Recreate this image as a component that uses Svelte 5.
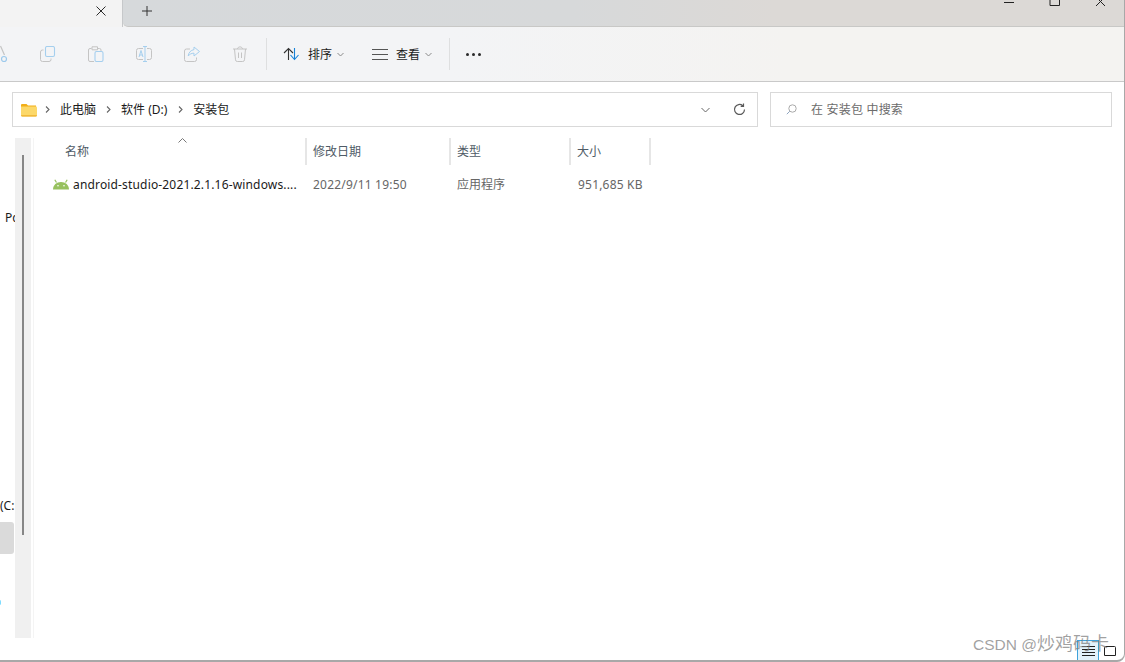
<script>
  const columns = [
    { label: '名称', width: 273, pad: 31 },
    { label: '修改日期', width: 144, pad: 6 },
    { label: '类型', width: 120, pad: 6 },
    { label: '大小', width: 80, pad: 6 }
  ];
</script>

<div class="window">
  <header class="titlebar">
    <div class="tab">
      <svg class="tab-close" width="12" height="12" viewBox="0 0 12 12"><path d="M1.500 1.500l9 9M10.500 1.500l-9 9" stroke="#2b2b2b" fill="none"/></svg>
    </div>
    <div class="tabstrip">
      <svg class="plus" width="12" height="12" viewBox="0 0 12 12"><path d="M6 1v10M1 6h10" stroke="#333" fill="none"/></svg>
      <div class="controls">
        <svg width="12" height="8" viewBox="0 0 12 8"><path d="M1 2.500h10" stroke="#222" fill="none"/></svg>
        <svg width="12" height="8" viewBox="0 0 12 8"><path d="M1.500 -3h8a1 1 0 0 1 1 1v7.500h-9.500v-7.500z" stroke="#222" fill="none"/></svg>
        <svg width="12" height="8" viewBox="0 0 12 8"><path d="M1 -3l9 9M10 -3l-9 9" stroke="#222" fill="none"/></svg>
      </div>
    </div>
  </header>

  <nav class="toolbar">
    <div class="edit-tools">
      <svg class="cut" width="14" height="20" viewBox="0 0 14 20"><path d="M0.500 2l4 9" stroke="#c4c4c4" fill="none" stroke-width="1.200"/><circle cx="4" cy="15" r="2.500" stroke="#9cc9ec" fill="none" stroke-width="1.200"/></svg>
      <svg width="16" height="16" viewBox="0 0 16 16"><path d="M3.500 4h-1a2 2 0 0 0-2 2v7.500a2 2 0 0 0 2 2h6.500a2 2 0 0 0 2-2v-1" stroke="#c4c4c4" fill="none" stroke-width="1"/><rect x="5.500" y=".5" width="9" height="10" rx="1.500" stroke="#a5cfee" fill="#f3f4f6" stroke-width="1.100"/></svg>
      <svg width="16" height="16" viewBox="0 0 16 16"><path d="M3.500 2.500h-1.500a1.500 1.500 0 0 0-1.500 1.500v10a1.500 1.500 0 0 0 1.500 1.500h4M10 2.500h1.500a1.500 1.500 0 0 1 1.500 1.500v1.500M4 .8h5.500v3h-5.500z" stroke="#c4c4c4" fill="none" stroke-width="1"/><rect x="7" y="5.500" width="8" height="10" rx="1.500" stroke="#a5cfee" fill="#f3f4f6" stroke-width="1.100"/></svg>
      <svg width="16" height="16" viewBox="0 0 16 16"><path d="M7 2.500h-4.500a2 2 0 0 0-2 2v7a2 2 0 0 0 2 2h4.500M11 2.500h2.500a2 2 0 0 1 2 2v7a2 2 0 0 1-2 2h-2.500" stroke="#c4c4c4" fill="none" stroke-width="1"/><path d="M9 .5v15M7 .5h4M7 15.500h4M3 11l2-6.500 2 6.500M3.800 9h2.500" stroke="#a5cfee" fill="none" stroke-width="1"/></svg>
      <svg width="16" height="16" viewBox="0 0 16 16"><path d="M6 3h-3.500a2 2 0 0 0-2 2v8.500a2 2 0 0 0 2 2h8a2 2 0 0 0 2-2v-2" stroke="#c4c4c4" fill="none" stroke-width="1"/><path d="M10 1l5.500 4.500-5.500 4.500v-2.800c-2.500 0-4.500 1-5.800 2.800.4-3.500 2.600-5.800 5.800-6.400z" stroke="#a5cfee" fill="none" stroke-width="1"/></svg>
      <svg width="16" height="16" viewBox="0 0 16 16"><path d="M1 3h14M5.500 3c0-2.800 5-2.800 5 0M2.500 3l1 10.800a1.800 1.800 0 0 0 1.800 1.700h5.400a1.800 1.800 0 0 0 1.800-1.700l1-10.800M6.500 6.500v5.500M9.500 6.500v5.500" stroke="#c4c4c4" fill="none" stroke-width="1"/></svg>
    </div>
    <span class="sep first"></span>
    <div class="menu sort">
      <svg width="17" height="14" viewBox="0 0 17 14"><path d="M5.500 13V1.500M1 6l4.500-4.500 4.500 4.500" stroke="#333" fill="none" stroke-width="1.100"/><path d="M11.500 1v11.500M7.500 8l4 4.500 4-4.500" stroke="#1682d8" fill="none" stroke-width="1.100"/></svg>
      <span>排序</span>
      <svg width="7" height="5" viewBox="0 0 7 5"><path d="M.5 1l3 3 3-3" stroke="#8a8a8a" fill="none"/></svg>
    </div>
    <div class="menu view">
      <svg width="16" height="11" viewBox="0 0 16 11"><path d="M0 .5h16M0 5.500h16M0 10.500h16" stroke="#555" fill="none"/></svg>
      <span>查看</span>
      <svg width="7" height="5" viewBox="0 0 7 5"><path d="M.5 1l3 3 3-3" stroke="#8a8a8a" fill="none"/></svg>
    </div>
    <span class="sep second"></span>
    <div class="more"><i></i><i></i><i></i></div>
  </nav>

  <section class="address-row">
    <div class="address">
      <svg class="folder" width="16" height="14" viewBox="0 0 16 14"><path d="M0 2a1 1 0 0 1 1-1h4.500l1.500 1.500h8v3H0z" fill="#f2ae17"/><path d="M0 3.500h15a1 1 0 0 1 1 1V12a1.500 1.500 0 0 1-1.500 1.500h-13A1.500 1.500 0 0 1 0 12z" fill="#fcd869"/><path d="M0 12.300h16v.2a1.200 1.200 0 0 1-1.200 1h-13.600a1.200 1.200 0 0 1-1.200-1z" fill="#eeb02c"/></svg>
      <svg class="crumb-arrow a1" width="5" height="7" viewBox="0 0 5 7"><path d="M1 .5l3 3-3 3" stroke="#666" fill="none" stroke-width="1.100"/></svg>
      <span class="crumb">此电脑</span>
      <svg class="crumb-arrow" width="5" height="7" viewBox="0 0 5 7"><path d="M1 .5l3 3-3 3" stroke="#666" fill="none" stroke-width="1.100"/></svg>
      <span class="crumb drive-crumb">软件 (D:)</span>
      <svg class="crumb-arrow" width="5" height="7" viewBox="0 0 5 7"><path d="M1 .5l3 3-3 3" stroke="#666" fill="none" stroke-width="1.100"/></svg>
      <span class="crumb">安装包</span>
      <svg class="addr-chevron" width="9" height="6" viewBox="0 0 9 6"><path d="M.5 1l4 4 4-4" stroke="#666" fill="none"/></svg>
      <svg class="refresh" width="13" height="13" viewBox="0 0 13 13"><path d="M11.500 6.500a5 5 0 1 1-1.700-3.800M10.500 .5v2.800H7.700" stroke="#5a5a5a" fill="none" stroke-width="1.200"/></svg>
    </div>
    <div class="search">
      <svg width="11" height="11" viewBox="0 0 11 11"><circle cx="6.500" cy="4.500" r="3.700" stroke="#aaa" fill="none"/><path d="M3.800 7.200L.8 10.200" stroke="#8fa5c0" fill="none"/></svg>
      <span>在 安装包 中搜索</span>
    </div>
  </section>

  <main class="body">
    <aside class="nav-pane">
      <span class="nav-text pc">Pc</span>
      <span class="nav-text drive">(C:</span>
      <div class="nav-selected"></div>
      <div class="nav-dot"></div>
    </aside>
    <div class="scroll-strip"><div class="thumb"></div></div>
    <div class="files">
      <div class="header">
        {#each columns as col}
          <div class="col" style="width:{col.width}px;padding-left:{col.pad}px">{col.label}</div>
        {/each}
        <svg class="sort-caret" width="9" height="5" viewBox="0 0 9 5"><path d="M.5 4.500l4-4 4 4" stroke="#777" fill="none"/></svg>
      </div>
      <div class="row">
        <div class="cell name">
          <svg width="16" height="11" viewBox="0 0 16 11"><path d="M0 10.500c0-4.500 3.500-7.500 8-7.500s8 3 8 7.500z" fill="#97c15e"/><path d="M3.500 3.500L1.800.8M12.500 3.500L14.200.8" stroke="#97c15e" fill="none" stroke-width="1.200"/><circle cx="5" cy="6.800" r=".8" fill="#fff"/><circle cx="11" cy="6.800" r=".8" fill="#fff"/></svg>
          <span>android-studio-2021.2.1.16-windows....</span>
        </div>
        <div class="cell date">2022/9/11 19:50</div>
        <div class="cell type">应用程序</div>
        <div class="cell size">951,685 KB</div>
      </div>
    </div>
  </main>

  <div class="view-buttons">
    <div class="view-btn active">
      <svg width="13" height="11" viewBox="0 0 13 11"><path d="M0 .5h13M0 3.500h13M0 6.500h13M0 9.500h13" stroke="#222" fill="none"/></svg>
    </div>
    <div class="view-btn">
      <svg width="12" height="10" viewBox="0 0 12 10"><path d="M1.500 .5h9a1 1 0 0 1 1 1v8h-11v-8a1 1 0 0 1 1-1z" stroke="#222" fill="none"/></svg>
    </div>
  </div>
  <div class="watermark">CSDN @<span>炒鸡码卡</span></div>
</div>

<style>
  :global(body) {
    margin: 0;
    background: #fff;
  }
  .window {
    position: relative;
    width: 1125px;
    height: 662px;
    box-sizing: border-box;
    overflow: hidden;
    display: flex;
    flex-direction: column;
    background: #fff;
    border-right: 1px solid #a8a8a8;
    border-bottom: 2px solid #a8a8a8;
    border-bottom-right-radius: 8px;
    font-family: "Noto Sans", "Noto Sans CJK SC", sans-serif;
    font-size: 12px;
    color: #1a1a1a;
  }
  .titlebar {
    flex: none;
    height: 27px;
    display: flex;
    background: #f3f3f3;
  }
  .tab {
    flex: none;
    width: 123px;
    display: flex;
    justify-content: flex-end;
    align-items: center;
    padding-right: 15px;
    box-sizing: border-box;
    background: #f3f3f3;
    border-right: 1px solid #c6c8ca;
  }
  .tab-close {
    margin-top: -5px;
  }
  .tabstrip {
    flex: 1;
    display: flex;
    align-items: flex-start;
    background: linear-gradient(90deg, #d6d9db 0%, #d7d9da 45%, #dcd9d6 65%, #dcd9d6 100%);
    border-bottom: 1px solid #c8c8c6;
    border-bottom-left-radius: 5px;
  }
  .plus {
    margin: 5px 0 0 18px;
  }
  .controls {
    margin-left: auto;
    margin-right: 17px;
    display: flex;
    gap: 34px;
  }
  .toolbar {
    flex: none;
    height: 55px;
    box-sizing: border-box;
    display: flex;
    align-items: center;
    background: linear-gradient(90deg, #f3f4f6 0%, #f3f4f6 40%, #f4f3f1 70%, #f4f3f1 100%);
    border-bottom: 1px solid #c9c9c9;
  }
  .edit-tools {
    flex: none;
    display: flex;
    align-items: center;
    gap: 32px;
    width: 249px;
  }
  .edit-tools svg {
    flex: none;
  }
  .cut {
    margin-right: -6px;
  }
  .sep {
    flex: none;
    width: 1px;
    height: 32px;
    background: #dedfe0;
  }
  .sep.first {
    margin-left: 17px;
  }
  .menu {
    display: flex;
    align-items: center;
    color: #1c1c1c;
  }
  .menu span {
    margin: 0 5px 0 8px;
  }
  .sort {
    margin-left: 16px;
  }
  .view {
    margin-left: 28px;
  }
  .sep.second {
    margin-left: 17px;
  }
  .more {
    display: flex;
    gap: 3px;
    margin-left: 16px;
  }
  .more i {
    display: block;
    width: 3px;
    height: 3px;
    border-radius: 50%;
    background: #2a2a2a;
  }
  .address-row {
    flex: none;
    display: flex;
    gap: 12px;
    margin: 10px 12px 0 12px;
    height: 35px;
  }
  .address, .search {
    box-sizing: border-box;
    height: 35px;
    border: 1px solid #d9d9d9;
    display: flex;
    align-items: center;
    background: #fff;
  }
  .address {
    width: 746px;
    padding-left: 8px;
  }
  .folder {
    flex: none;
  }
  .crumb-arrow {
    flex: none;
    margin: 0 10px;
  }
  .crumb-arrow.a1 {
    margin: 0 10px 0 8px;
  }
  .crumb {
    margin-top: -2px;
    color: #1a1a1a;
  }
  .drive-crumb {
    margin-right: 1px;
  }
  .addr-chevron {
    margin-left: auto;
    margin-right: 23px;
  }
  .refresh {
    margin-right: 11px;
  }
  .search {
    width: 342px;
    padding-left: 15px;
    color: #6b6b6b;
    gap: 14px;
  }
  .search span {
    margin-top: -2px;
    letter-spacing: 0.2px;
  }
  .body {
    flex: 1;
    display: flex;
    margin-top: 11px;
    min-height: 0;
  }
  .nav-pane {
    flex: none;
    position: relative;
    width: 15px;
    height: 500px;
    overflow: hidden;
  }
  .nav-text {
    position: absolute;
    left: 5px;
    white-space: nowrap;
  }
  .nav-text.pc {
    top: 71px;
  }
  .nav-text.drive {
    left: 0;
    top: 359px;
  }
  .nav-selected {
    position: absolute;
    left: -6px;
    top: 384px;
    width: 20px;
    height: 32px;
    background: #dadada;
    border-radius: 3px;
  }
  .nav-dot {
    position: absolute;
    left: -2px;
    top: 462px;
    width: 3px;
    height: 5px;
    border-radius: 2px;
    background: #7fdcff;
  }
  .scroll-strip {
    flex: none;
    width: 16px;
    height: 500px;
    background: #f0f0f0;
    display: flex;
    flex-direction: column;
    align-items: center;
    box-sizing: border-box;
    padding-top: 17px;
  }
  .thumb {
    width: 2px;
    height: 380px;
    background: #868686;
  }
  .files {
    flex: 1;
    margin-left: 2px;
    height: 500px;
    border-left: 1px solid #f4f4f4;
    position: relative;
  }
  .header {
    display: flex;
    height: 27px;
    position: relative;
  }
  .col {
    box-sizing: border-box;
    height: 27px;
    line-height: 28px;
    border-right: 2px solid #e6e6e6;
    color: #4f5b66;
  }
  .sort-caret {
    position: absolute;
    left: 144px;
    top: 0;
  }
  .row {
    display: flex;
    align-items: center;
    height: 24px;
    margin-top: 7px;
    color: #666;
  }
  .cell {
    box-sizing: border-box;
    white-space: nowrap;
  }
  .name {
    width: 273px;
    padding-left: 19px;
    display: flex;
    align-items: center;
    gap: 4px;
    color: #1a1a1a;
    letter-spacing: 0.16px;
  }
  .date {
    width: 144px;
    padding-left: 6px;
    letter-spacing: 0.2px;
  }
  .type {
    width: 121px;
    padding-left: 6px;
  }
  .size {
    width: 79px;
    padding-left: 6px;
    letter-spacing: 0.2px;
  }
  .watermark {
    position: absolute;
    left: 973px;
    top: 629px;
    font-size: 15.5px;
    color: rgba(125, 125, 125, 0.72);
    white-space: nowrap;
    font-family: "Liberation Sans", "Noto Sans CJK SC", sans-serif;
  }
  .watermark span {
    font-size: 18px;
  }
  .view-buttons {
    position: absolute;
    left: 1077px;
    top: 640px;
    display: flex;
  }
  .view-btn {
    box-sizing: border-box;
    width: 22px;
    height: 22px;
    display: flex;
    align-items: center;
    justify-content: center;
  }
  .view-btn.active {
    background: #e3f2fb;
    border: 1px solid #3fa2db;
  }
</style>
